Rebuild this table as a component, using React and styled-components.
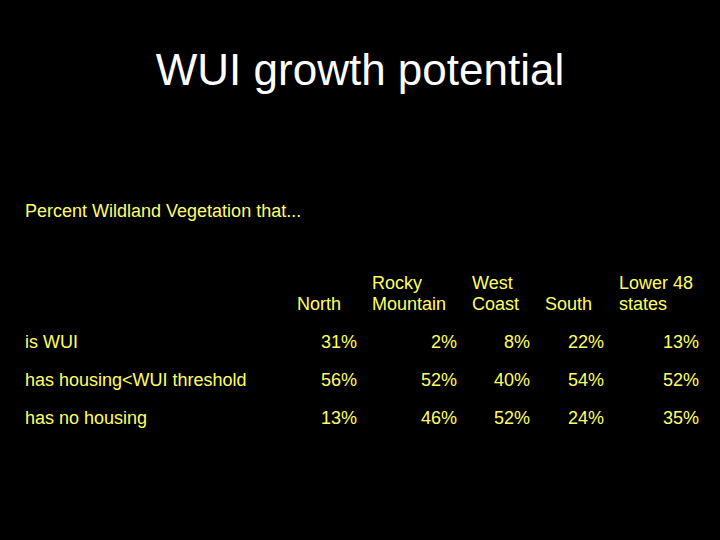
import styled, { createGlobalStyle } from 'styled-components';

const GlobalStyle = createGlobalStyle`
  html, body {
    margin: 0;
    padding: 0;
    background: #000;
  }
`;

const Slide = styled.div`
  width: 720px;
  height: 540px;
  background: #000;
  font-family: "Liberation Sans", Arial, sans-serif;
  overflow: hidden;
`;

const Title = styled.h1`
  margin: 0;
  padding-top: 48px;
  font-size: 44px;
  line-height: 44px;
  font-weight: normal;
  color: #fff;
  text-align: center;
`;

const Subtitle = styled.div`
  margin-top: 110px;
  padding-left: 25px;
  font-size: 18px;
  line-height: 18px;
  color: #ffff66;
`;

const Table = styled.div`
  margin-top: 53px;
  padding-left: 25px;
  display: grid;
  grid-template-columns: 257px 60px 85px 58px 59px 80px;
  column-gap: 15px;
  row-gap: 17px;
  grid-auto-rows: 21px;
  grid-template-rows: 42px;
  font-size: 18px;
  line-height: 21px;
  color: #ffff66;
`;

const Head = styled.div`
  align-self: end;
  text-align: left;
  white-space: pre-line;
`;

const Label = styled.div`
  white-space: nowrap;
`;

const Value = styled.div`
  text-align: right;
`;

const columns = ['North', 'Rocky\nMountain', 'West\nCoast', 'South', 'Lower 48\nstates'];

const rows = [
  { label: 'is WUI', values: ['31%', '2%', '8%', '22%', '13%'] },
  { label: 'has housing<WUI threshold', values: ['56%', '52%', '40%', '54%', '52%'] },
  { label: 'has no housing', values: ['13%', '46%', '52%', '24%', '35%'] },
];

export default function App() {
  return (
    <>
      <GlobalStyle />
      <Slide>
        <Title>WUI growth potential</Title>
        <Subtitle>Percent Wildland Vegetation that...</Subtitle>
        <Table>
          <div />
          {columns.map((c) => (
            <Head key={c}>{c}</Head>
          ))}
          {rows.map((r) => [
            <Label key={r.label}>{r.label}</Label>,
            ...r.values.map((v, i) => <Value key={r.label + i}>{v}</Value>),
          ])}
        </Table>
      </Slide>
    </>
  );
}
